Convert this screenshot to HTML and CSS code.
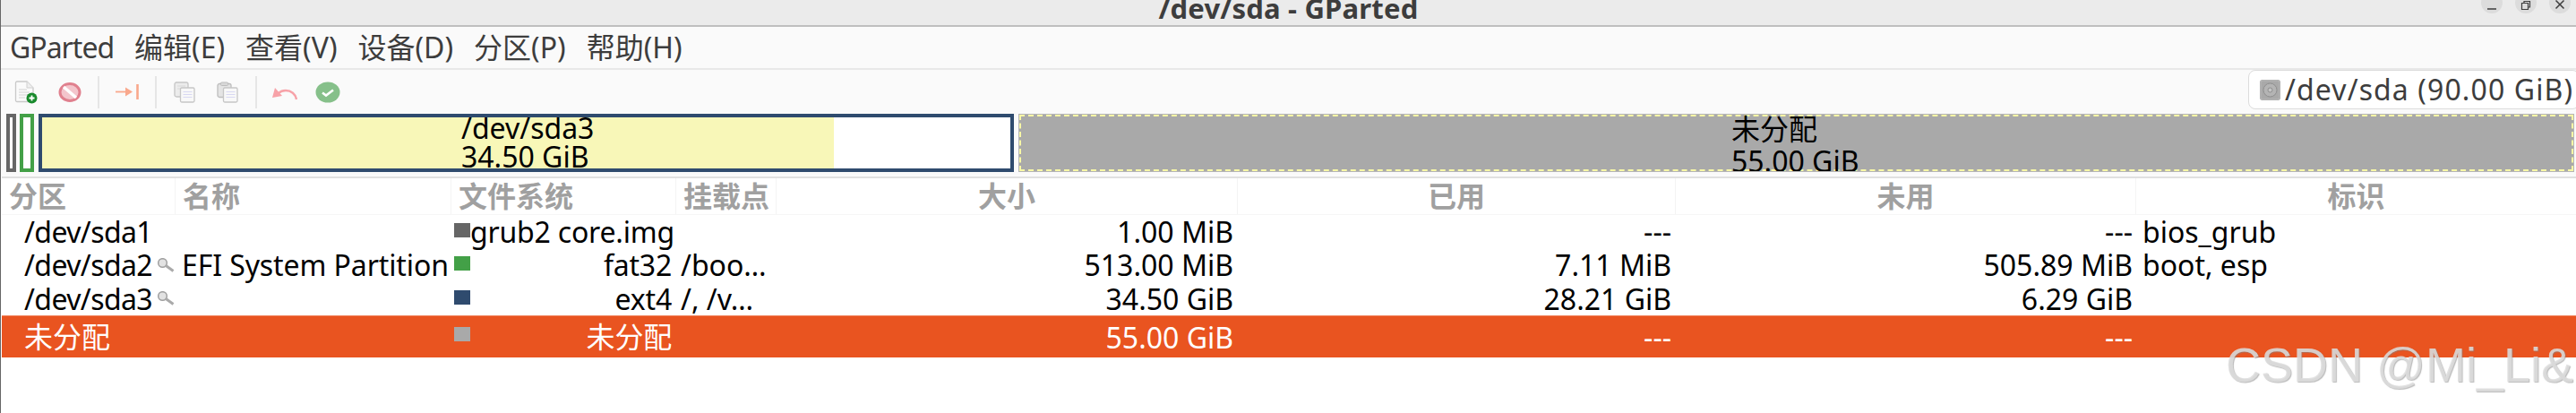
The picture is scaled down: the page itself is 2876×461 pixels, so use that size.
FILE: index.html
```html
<!DOCTYPE html>
<html lang="zh">
<head>
<meta charset="utf-8">
<title>/dev/sda - GParted</title>
<link rel="stylesheet" href="styles.css">
</head>
<body>
<div class="window">
  <header class="titlebar">
    <div></div>
    <div class="title">/dev/sda - GParted</div>
    <div class="winctl">
      <span class="winbtn"><svg width="14" height="14" viewBox="0 0 14 14"><path d="M2 11h10" stroke="#3d3d3d" stroke-width="1.5"/></svg></span>
      <span class="winbtn"><svg width="14" height="14" viewBox="0 0 14 14"><path d="M2.5 4.5h7v7h-7zM5 4.5V2.500h6.500V9H9.500" fill="none" stroke="#3d3d3d" stroke-width="1.200"/></svg></span>
      <span class="winbtn"><svg width="14" height="14" viewBox="0 0 14 14"><path d="M2.500 1.500l9 9M11.500 1.500l-9 9" stroke="#3d3d3d" stroke-width="1.500"/></svg></span>
    </div>
  </header>

  <nav class="menubar">
    <span class="appmenu">GParted</span><span>编辑(E)</span><span>查看(V)</span><span>设备(D)</span><span>分区(P)</span><span>帮助(H)</span>
  </nav>

  <div class="toolbar">
    <span class="tool"><svg width="28" height="26" viewBox="0 0 28 26"><path d="M1.500 2.500a1.500 1.500 0 0 1 1.500-1.500h11l7 7v14a1.500 1.500 0 0 1-1.500 1.500H3a1.500 1.500 0 0 1-1.500-1.500z" fill="#fafafa" stroke="#c9c9c9" stroke-width="1.300"/><path d="M14 1v7h7" fill="#eee" stroke="#d0d0d0"/><path d="M5 10h9M5 13h12M5 16h12M5 19h7" stroke="#d2d2d2" stroke-width="1.200"/><circle cx="19.500" cy="19.500" r="6" fill="#198a2c"/><path d="M16.500 19.500h6M19.500 16.500v6" stroke="#fff" stroke-width="1.800"/></svg></span>
    <span class="tool"><svg width="26" height="24" viewBox="0 0 26 24"><ellipse cx="13" cy="12" rx="11" ry="9.500" fill="#f3c5cc" stroke="#e0808e" stroke-width="3"/><path d="M6 6l14 12" stroke="#fff" stroke-width="3.500"/><path d="M5 5l3-2M18 21l3-2" stroke="#e0808e" stroke-width="1"/></svg></span>
    <span class="sep"></span>
    <span class="tool"><svg width="26" height="20" viewBox="0 0 26 20"><path d="M0 9.500h17" stroke="#f9a88c" stroke-width="1.800"/><path d="M11 4.500l8 5-8 5z" fill="#f9a88c"/><path d="M24.500 1v17" stroke="#f9a88c" stroke-width="2.600"/></svg></span>
    <span class="sep"></span>
    <span class="tool"><svg width="24" height="24" viewBox="0 0 24 24"><rect x="1" y="1" width="15" height="16" rx="2" fill="#ececec" stroke="#c6c6c6" stroke-width="1.300"/><path d="M4 5h9M4 8h9" stroke="#d8d8d8"/><rect x="7.500" y="7" width="15.500" height="16" rx="1.500" fill="#f8f8f8" stroke="#c6c6c6" stroke-width="1.300"/><path d="M10.500 11.500h10M10.500 14.500h10M10.500 17.500h10" stroke="#d8d8f2" stroke-width="1.200"/></svg></span>
    <span class="tool"><svg width="24" height="24" viewBox="0 0 24 24"><rect x="1" y="2.500" width="15" height="15" rx="2" fill="#e4e4e4" stroke="#bdbdbd" stroke-width="1.300"/><rect x="4.500" y="1" width="8" height="3.500" rx="1" fill="#d8d8d8" stroke="#bdbdbd"/><rect x="7.500" y="7" width="15.500" height="16" rx="1.500" fill="#f8f8f8" stroke="#c6c6c6" stroke-width="1.300"/><path d="M10.500 11.500h10M10.500 14.500h10M10.500 17.500h10" stroke="#d8d8f2" stroke-width="1.200"/></svg></span>
    <span class="sep"></span>
    <span class="tool"><svg width="28" height="20" viewBox="0 0 28 20"><path d="M27 18c-1-6-6-10-12-10-3 0-6 1-8 3" fill="none" stroke="#f7a2a8" stroke-width="2.400"/><path d="M0 16l3-11 8 9z" fill="#f7a2a8"/></svg></span>
    <span class="tool"><svg width="28" height="24" viewBox="0 0 28 24"><ellipse cx="14" cy="12" rx="13.500" ry="11.500" fill="#86c08a"/><path d="M8 12.500l4 3 8-6" fill="none" stroke="#fff" stroke-width="2.600"/></svg></span>
    <div class="device">
      <svg class="disk" width="23" height="23" viewBox="0 0 23 23"><rect width="23" height="23" rx="3" fill="#a9a9a9"/><rect x="1" y="1" width="21" height="21" rx="2.500" fill="none" stroke="#b9b9b9"/><circle cx="11.500" cy="11.500" r="7.500" fill="#b4b4b4" stroke="#8f8f8f"/><circle cx="11.500" cy="11.500" r="2.500" fill="#c4c4c4" stroke="#8f8f8f"/></svg>
      <span class="device-name">/dev/sda (90.00 GiB)</span>
      <svg class="chev" width="12" height="7" viewBox="0 0 12 7"><path d="M1 1l5 4.500L11 1" fill="none" stroke="#777" stroke-width="1.500"/></svg>
    </div>
  </div>

  <div class="diskmap">
    <div class="part p1"></div>
    <div class="part p2"></div>
    <div class="part p3">
      <div class="p3-used"></div>
      <div class="part-label label3">/dev/sda3<br>34.50 GiB</div>
    </div>
    <div class="part p4">
      <div class="p4-dash"></div>
      <div class="part-label label4">未分配<br>55.00 GiB</div>
    </div>
  </div>

  <div class="table">
    <div class="row head">
      <div class="hc">分区</div><div class="hc">名称</div><div class="hc">文件系统</div><div class="hc">挂载点</div><div class="hc ctr">大小</div><div class="hc ctr">已用</div><div class="hc ctr">未用</div><div class="hc ctr">标识</div>
    </div>
    <div class="row r1">
      <div class="c cpart"><span class="dev">/dev/sda1</span></div><div class="c cname"></div>
      <div class="c cfs"><i class="sw sw1"></i><span>grub2 core.img</span></div>
      <div class="c cmount"></div><div class="c num n1">1.00 MiB</div><div class="c num n2">---</div><div class="c num n3">---</div><div class="c cflags">bios_grub</div>
    </div>
    <div class="row r2">
      <div class="c cpart"><span class="dev">/dev/sda2</span><svg class="key" width="19" height="16" viewBox="0 0 19 16"><circle cx="5.500" cy="5.500" r="4.800" fill="#e2e2e2" stroke="#a0a0a0" stroke-width="1.500"/><path d="M8.500 8l9 6.500" stroke="#aaa" stroke-width="3"/></svg></div>
      <div class="c cname">EFI System Partition</div>
      <div class="c cfs"><i class="sw sw2"></i><span>fat32</span></div>
      <div class="c cmount">/boo…</div><div class="c num n1">513.00 MiB</div><div class="c num n2">7.11 MiB</div><div class="c num n3">505.89 MiB</div><div class="c cflags">boot, esp</div>
    </div>
    <div class="row r3">
      <div class="c cpart"><span class="dev">/dev/sda3</span><svg class="key" width="19" height="16" viewBox="0 0 19 16"><circle cx="5.500" cy="5.500" r="4.800" fill="#e2e2e2" stroke="#a0a0a0" stroke-width="1.500"/><path d="M8.500 8l9 6.500" stroke="#aaa" stroke-width="3"/></svg></div>
      <div class="c cname"></div>
      <div class="c cfs"><i class="sw sw3"></i><span>ext4</span></div>
      <div class="c cmount">/, /v…</div><div class="c num n1">34.50 GiB</div><div class="c num n2">28.21 GiB</div><div class="c num n3">6.29 GiB</div><div class="c cflags"></div>
    </div>
    <div class="row selected">
      <div class="c cpart">未分配</div><div class="c cname"></div>
      <div class="c cfs"><i class="sw sw4"></i><span>未分配</span></div>
      <div class="c cmount"></div><div class="c num n1">55.00 GiB</div><div class="c num n2">---</div><div class="c num n3">---</div><div class="c cflags"></div>
    </div>
  </div>

  <div class="watermark">CSDN @Mi_Li&amp;</div>
</div>
</body>
</html>
```
FILE: styles.css
```css
* { box-sizing: border-box; }
html, body { margin: 0; padding: 0; background: #fff; }
body {
  width: 2876px;
  height: 461px;
  overflow: hidden;
  font-family: "Noto Sans", "Noto Sans CJK SC", sans-serif;
  font-size: 32px;
  color: #000;
}
.window {
  position: relative;
  width: 2876px;
  height: 461px;
  overflow: hidden;
  border-left: 1px solid #666;
  background: #fff;
}

/* title bar */
.titlebar {
  height: 30px;
  display: grid;
  grid-template-columns: 1fr auto 1fr;
  background: #ebebeb;
  border-bottom: 2px solid #bfbfbf;
  overflow: hidden;
}
.title {
  margin-top: -11px;
  height: 40px;
  line-height: 40px;
  font-size: 31px;
  letter-spacing: 0.2px;
  font-weight: 700;
  color: #3d3d3d;
}
.winctl {
  display: flex;
  justify-content: flex-end;
  gap: 14px;
  padding-right: 6px;
  margin-top: -9px;
}
.winbtn {
  width: 24px;
  height: 24px;
  border-radius: 50%;
  background: #dcdcdc;
  display: flex;
  align-items: center;
  justify-content: center;
  padding-top: 6px;
}

/* menu bar */
.menubar {
  height: 48px;
  display: flex;
  align-items: center;
  gap: 23px;
  padding-left: 10px;
  background: #fafafa;
  border-bottom: 2px solid #e8e8e8;
  color: #3d3d3d;
  line-height: 46px;
}
.appmenu { letter-spacing: -1px; }

/* toolbar */
.toolbar {
  height: 49px;
  display: flex;
  align-items: center;
  padding-left: 5px;
  background: #fafafa;
}
.tool {
  width: 48px;
  height: 44px;
  display: flex;
  align-items: center;
  justify-content: center;
}
.sep {
  width: 2px;
  height: 36px;
  margin: 0 7px;
  background: #e6e6e6;
}
.device {
  flex: none;
  margin-left: auto;
  margin-right: -4px;
  width: 370px;
  height: 44px;
  align-self: flex-start;
  display: flex;
  align-items: center;
  gap: 5px;
  padding-left: 12px;
  background: #fff;
  border: 1px solid #dcdcdc;
  border-radius: 8px;
  color: #3d3d3d;
}
.disk { flex: none; }
.device-name { line-height: 42px; letter-spacing: 1.1px; white-space: nowrap; }
.chev { margin-left: 3px; flex: none; }

/* disk map */
.diskmap {
  height: 70px;
  display: flex;
  gap: 4px;
  padding: 0 2px 5px 6px;
  background: #fafafa;
}
.part { height: 65px; position: relative; overflow: hidden; }
.p1 { width: 11px; border: 4px solid #666; background: #fff; }
.p2 { width: 16px; border: 4px solid #43a047; background: #fff; }
.p3 {
  width: 1089px;
  margin-left: 1px;
  border: 4px solid #2f4b6e;
  background: #fff;
}
.p3-used { width: 884px; height: 100%; background: #f8f7b8; }
.p4 {
  flex: 1;
  display: flex;
  margin-left: 1px;
  background: #a9a9a9;
  border: 1px solid #b5b5b5;
}
.p4-dash { flex: 1; border: 2px dashed #f7f7a6; }
.part-label {
  position: absolute;
  line-height: 32px;
  white-space: nowrap;
  color: #000;
}
.label3 { left: 468px; top: -4px; }
.label4 { left: 795px; top: -2px; line-height: 36px; }

/* table */
.table {
  border-top: 2px solid #e0e0e0;
  margin-left: 1px;
}
.row {
  display: grid;
  grid-template-columns: 194px 308px 251px 112px 515px 489px 514px 1fr;
  align-items: center;
  white-space: nowrap;
}
.head {
  height: 41px;
  color: #a0a0a0;
  font-weight: 700;
  border-bottom: 1px solid #f6f6f6;
}
.hc {
  height: 40px;
  line-height: 40px;
  padding-left: 8px;
  border-right: 1px solid #f4f4f4;
}
.hc.ctr { padding-left: 0; text-align: center; }
.hc:last-child { border-right: 0; }
.r1, .r2 { height: 37px; }
.r3 { height: 38px; }
.c { line-height: 37px; height: 37px; min-width: 0; }
.cpart { padding-left: 25px; padding-right: 1px; display: flex; align-items: center; }
.dev { letter-spacing: -0.6px; }
.key { margin-left: auto; flex: none; }
.cname { padding-left: 7px; letter-spacing: -0.1px; }
.cfs { display: flex; align-items: center; padding: 0 5px 0 3px; }
.cfs span { margin-left: auto; letter-spacing: -0.2px; }
.cmount { padding-left: 5px; overflow: hidden; }
.num { text-align: right; }
.n1, .n2 { padding-right: 5px; }
.n3 { padding-right: 4px; }
.cflags { padding-left: 7px; }
.sw { display: block; flex: none; width: 18px; height: 16px; margin-top: -3px; }
.sw1 { background: #666; }
.sw2 { background: #43a047; }
.sw3 { background: #2f4b6e; }
.sw4 { background: #a9a9a9; margin-top: -6px; }
.selected {
  height: 47px;
  background: #e95420;
  border-top: 1px solid #ef8059;
  color: #fff;
}
.selected .c { height: 46px; line-height: 48px; }

/* watermark */
.watermark {
  position: absolute;
  right: 3px;
  top: 376px;
  font-family: "Liberation Sans", sans-serif;
  font-size: 54px;
  line-height: 62px;
  color: rgba(222, 222, 222, 0.85);
  text-shadow: 1px 1px 1px rgba(130, 130, 130, 0.55);
  white-space: nowrap;
}
```
